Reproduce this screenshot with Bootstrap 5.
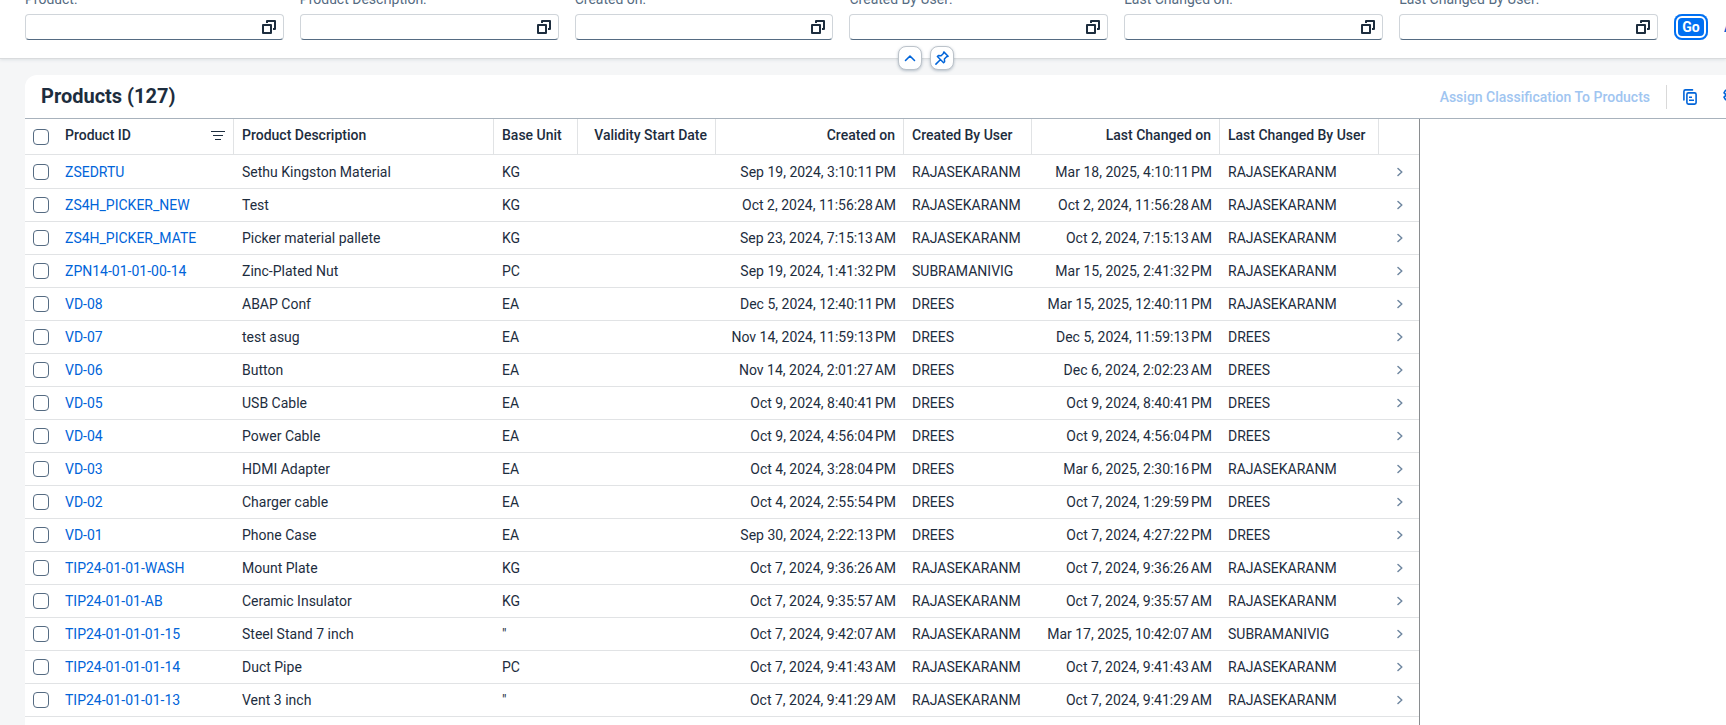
<!DOCTYPE html>
<html lang="en">
<head>
<meta charset="utf-8">
<meta name="viewport" content="width=device-width, initial-scale=1">
<title>Products</title>
<link href="https://cdn.jsdelivr.net/npm/bootstrap@5.3.0/dist/css/bootstrap.min.css" rel="stylesheet">
<style>
  :root { --ink: #1d2d3e; --muted: #556b82; --brand: #0064d9; --line: #e1e3e5; }
  body { font-family: Roboto, "Liberation Sans", sans-serif; font-size: 14px; line-height: 16px; color: var(--ink); background: #f5f6f7; overflow: hidden; }
  svg { display: block; fill: none; stroke: currentColor; }

  /* filter bar, scrolled so that the labels are partly out of view */
  .filter-bar { background: #fff; margin-top: -9px; padding: 0 0 18px 25px; border-bottom: 1px solid #d9dbdd; box-shadow: 0 1px 3px rgba(85,107,130,.15); }
  .filter-field { flex: 1 1 0; min-width: 0; }
  .filter-field label { color: var(--muted); padding-bottom: 7px; display: block; white-space: nowrap; }
  .value-box { height: 26px; border: 1px solid #d0d5da; border-bottom-color: var(--muted); border-radius: 4px; background: #fff; }
  .value-box input { height: 24px; font-size: 14px; }
  .value-box button { width: 32px; color: var(--ink); }
  .go-btn { width: 34px; height: 26px; font-size: 14px; border-radius: 8px; background: #0070f2; color: #fff; box-shadow: inset 0 0 0 2px #0070f2, inset 0 0 0 4px #fff; }
  .cut-off { width: 2px; overflow: hidden; }
  .plain-btn { color: var(--brand); line-height: 26px; white-space: nowrap; }
  .bar-toggles { top: 100%; left: calc(50% + 63px); transform: translate(-50%, -50%); z-index: 2; }
  .bar-toggles button { width: 24px; height: 24px; border: 1px solid #bcc3ca; border-radius: 8px; background: #fff; color: var(--brand); box-shadow: 0 1px 3px rgba(85,107,130,.4); }

  .list-panel { margin: 16px 0 0 25px; background: #fff; border-top-left-radius: 12px; }
  .list-toolbar { height: 44px; padding-left: 16px; border-bottom: 1px solid #a8b2bc; }
  .list-title { font-size: 20px; line-height: 24px; padding-bottom: 2px; }
  .assign-btn { color: #a0c5f1; font-weight: 500; }
  .tool-sep { width: 1px; height: 24px; background: #d9d9d9; }
  .tool-icon { color: var(--brand); width: 14px; }
  .tool-next { width: 3px; overflow: hidden; margin-left: 10px; }

  .table-frame { width: 1395px; border-right: 1px solid #8a8d90; }
  .products { table-layout: fixed; width: 1394px; border-collapse: separate; border-spacing: 0; }
  .products th, .products td { padding: 0 8px; white-space: nowrap; border-bottom: 1px solid var(--line); vertical-align: middle; }
  .products th { height: 36px; font-weight: 500; border-right: 1px solid var(--line); padding-bottom: 3px; }
  .products th.pick { padding-bottom: 0; border-right: 0; }
  .products th:last-child { border-right: 0; }
  .products td { height: 33px; }
  .products tbody tr:first-child td { height: 34px; }
  .products a { color: var(--brand); }
  .products .form-check-input { width: 16px; height: 16px; margin: 0; border: 1px solid var(--muted); border-radius: 4px; display: block; }
  .row-arrow { color: #6f87a0; }
  .row-arrow svg { margin-left: 10px; }
</style>
</head>
<body class="d-flex flex-column vh-100">

<svg class="d-none" aria-hidden="true">
  <symbol id="i-value" viewBox="0 0 14 14"><path stroke-width="2" stroke-linejoin="round" d="M1 5h8v8H1z"/><path stroke-width="2" stroke-linejoin="round" d="M5 3V1h8v8h-2"/></symbol>
  <symbol id="i-up" viewBox="0 0 14 14"><path stroke-width="1.6" stroke-linecap="round" stroke-linejoin="round" d="M2.500 9.500 7 5l4.500 4.500"/></symbol>
  <symbol id="i-pin" viewBox="0 0 14 14"><path stroke-width="1.500" stroke-linejoin="round" stroke-linecap="round" d="M8.800.9l4.300 4.300-1.500.5-2.200 2.300.2 2.800-1 .9L2.400 5.500l1-.9 2.700.1 2.300-2.200zM5.300 8.700.9 13.100"/></symbol>
  <symbol id="i-filter" viewBox="0 0 14 10"><path d="M0 1.500h14M2 5.500h10M4 9.500h6"/></symbol>
  <symbol id="i-copy" viewBox="0 0 14 16"><path stroke-width="1.600" stroke-linejoin="round" stroke-linecap="round" d="M.9 11V2.500Q.9.900 2.500.900H9.500"/><rect x="3.900" y="3.900" width="9.200" height="11.200" rx="1.500" stroke-width="1.600"/><path stroke-width="1.500" d="M6 8.200h3M6 11.200h5"/></symbol>
  <symbol id="i-gear" viewBox="0 0 16 16"><path stroke-width="1.600" stroke-linejoin="round" d="M6.500 1h3l.5 2 1.500.9 2-.6 1.500 2.500L13.500 7.200v1.600L15 10.200l-1.500 2.500-2-.6-1.500.9-.5 2h-3L6 13l-1.500-.9-2 .6L1 10.200 2.500 8.800V7.200L1 5.800l1.500-2.500 2 .6L6 3z"/><circle cx="8" cy="8" r="2.200" stroke-width="1.600"/></symbol>
  <symbol id="i-next" viewBox="0 0 6 10"><path stroke-width="1.500" stroke-linecap="round" stroke-linejoin="round" d="M1 1.500 4.800 5 1 8.500"/></symbol>
</svg>

<header class="filter-bar position-relative flex-shrink-0">
  <form class="d-flex align-items-end gap-3" id="filters" onsubmit="return false">
    <button type="submit" class="go-btn btn border-0 p-0 flex-shrink-0 fw-bold lh-1">Go</button>
    <div class="cut-off flex-shrink-0"><button type="button" class="plain-btn border-0 bg-transparent p-0 fw-bold">Adapt Filters</button></div>
  </form>
  <div class="bar-toggles position-absolute d-flex gap-2">
    <button type="button" class="p-0 d-flex align-items-center justify-content-center" aria-label="Collapse header"><svg width="14" height="14"><use href="#i-up"/></svg></button>
    <button type="button" class="p-0 d-flex align-items-center justify-content-center" aria-label="Pin header"><svg width="14" height="14"><use href="#i-pin"/></svg></button>
  </div>
</header>

<main class="list-panel flex-grow-1 d-flex flex-column">
  <div class="list-toolbar d-flex align-items-center flex-shrink-0">
    <h1 class="list-title fw-bold mb-0 me-auto">Products (127)</h1>
    <div class="d-flex align-items-center gap-3">
      <button type="button" class="assign-btn border-0 bg-transparent p-0" disabled>Assign Classification To Products</button>
      <span class="tool-sep"></span>
      <button type="button" class="tool-icon border-0 bg-transparent p-0" aria-label="Copy"><svg width="14" height="16"><use href="#i-copy"/></svg></button>
      <div class="tool-next"><button type="button" class="tool-icon border-0 bg-transparent p-0" aria-label="Settings"><svg width="16" height="16"><use href="#i-gear"/></svg></button></div>
    </div>
  </div>
  <div class="table-frame flex-grow-1">
    <table class="products">
      <colgroup><col style="width:32px"><col style="width:177px"><col style="width:260px"><col style="width:84px"><col style="width:138px"><col style="width:188px"><col style="width:128px"><col style="width:188px"><col style="width:159px"><col style="width:40px"></colgroup>
      <thead>
        <tr>
          <th class="pick"><input type="checkbox" class="form-check-input" aria-label="Select all"></th>
          <th><div class="d-flex align-items-center justify-content-between">Product ID<svg width="14" height="10"><use href="#i-filter"/></svg></div></th>
          <th>Product Description</th>
          <th>Base Unit</th>
          <th class="text-end">Validity Start Date</th>
          <th class="text-end">Created on</th>
          <th>Created By User</th>
          <th class="text-end">Last Changed on</th>
          <th>Last Changed By User</th>
          <th></th>
        </tr>
      </thead>
      <tbody id="rows"></tbody>
    </table>
  </div>
</main>

<script>
  const fields = ['Product', 'Product Description', 'Created on', 'Created By User', 'Last Changed on', 'Last Changed By User'];
  document.getElementById('filters').insertAdjacentHTML('afterbegin', fields.map((name, i) => `
    <div class="filter-field">
      <label for="f${i}">${name}:</label>
      <div class="value-box d-flex">
        <input id="f${i}" type="text" class="form-control border-0 bg-transparent shadow-none px-2 py-0">
        <button type="button" class="border-0 bg-transparent p-0 d-flex align-items-center justify-content-center" aria-label="Value help"><svg width="14" height="14"><use href="#i-value"/></svg></button>
      </div>
    </div>`).join(''));

  const R = 'RAJASEKARANM', S = 'SUBRAMANIVIG', D = 'DREES';
  const products = [
    ['ZSEDRTU', 'Sethu Kingston Material', 'KG', 'Sep 19, 2024, 3:10:11 PM', R, 'Mar 18, 2025, 4:10:11 PM', R],
    ['ZS4H_PICKER_NEW', 'Test', 'KG', 'Oct 2, 2024, 11:56:28 AM', R, 'Oct 2, 2024, 11:56:28 AM', R],
    ['ZS4H_PICKER_MATE', 'Picker material pallete', 'KG', 'Sep 23, 2024, 7:15:13 AM', R, 'Oct 2, 2024, 7:15:13 AM', R],
    ['ZPN14-01-01-00-14', 'Zinc-Plated Nut', 'PC', 'Sep 19, 2024, 1:41:32 PM', S, 'Mar 15, 2025, 2:41:32 PM', R],
    ['VD-08', 'ABAP Conf', 'EA', 'Dec 5, 2024, 12:40:11 PM', D, 'Mar 15, 2025, 12:40:11 PM', R],
    ['VD-07', 'test asug', 'EA', 'Nov 14, 2024, 11:59:13 PM', D, 'Dec 5, 2024, 11:59:13 PM', D],
    ['VD-06', 'Button', 'EA', 'Nov 14, 2024, 2:01:27 AM', D, 'Dec 6, 2024, 2:02:23 AM', D],
    ['VD-05', 'USB Cable', 'EA', 'Oct 9, 2024, 8:40:41 PM', D, 'Oct 9, 2024, 8:40:41 PM', D],
    ['VD-04', 'Power Cable', 'EA', 'Oct 9, 2024, 4:56:04 PM', D, 'Oct 9, 2024, 4:56:04 PM', D],
    ['VD-03', 'HDMI Adapter', 'EA', 'Oct 4, 2024, 3:28:04 PM', D, 'Mar 6, 2025, 2:30:16 PM', R],
    ['VD-02', 'Charger cable', 'EA', 'Oct 4, 2024, 2:55:54 PM', D, 'Oct 7, 2024, 1:29:59 PM', D],
    ['VD-01', 'Phone Case', 'EA', 'Sep 30, 2024, 2:22:13 PM', D, 'Oct 7, 2024, 4:27:22 PM', D],
    ['TIP24-01-01-WASH', 'Mount Plate', 'KG', 'Oct 7, 2024, 9:36:26 AM', R, 'Oct 7, 2024, 9:36:26 AM', R],
    ['TIP24-01-01-AB', 'Ceramic Insulator', 'KG', 'Oct 7, 2024, 9:35:57 AM', R, 'Oct 7, 2024, 9:35:57 AM', R],
    ['TIP24-01-01-01-15', 'Steel Stand 7 inch', '"', 'Oct 7, 2024, 9:42:07 AM', R, 'Mar 17, 2025, 10:42:07 AM', S],
    ['TIP24-01-01-01-14', 'Duct Pipe', 'PC', 'Oct 7, 2024, 9:41:43 AM', R, 'Oct 7, 2024, 9:41:43 AM', R],
    ['TIP24-01-01-01-13', 'Vent 3 inch', '"', 'Oct 7, 2024, 9:41:29 AM', R, 'Oct 7, 2024, 9:41:29 AM', R]
  ];
  // a narrow no-break space joins the time to AM/PM
  const stamp = t => t.replace(/ ([AP]M)$/, '\u202f$1');
  document.getElementById('rows').innerHTML = products.map(p => `
    <tr>
      <td><input type="checkbox" class="form-check-input" aria-label="Select ${p[0]}"></td>
      <td><a href="#" class="text-decoration-none">${p[0]}</a></td>
      <td>${p[1]}</td><td>${p[2]}</td><td></td>
      <td class="text-end">${stamp(p[3])}</td><td>${p[4]}</td>
      <td class="text-end">${stamp(p[5])}</td><td>${p[6]}</td>
      <td class="row-arrow"><svg width="6" height="10"><use href="#i-next"/></svg></td>
    </tr>`).join('');
</script>
<script src="https://cdn.jsdelivr.net/npm/bootstrap@5.3.0/dist/js/bootstrap.bundle.min.js"></script>
</body>
</html>
